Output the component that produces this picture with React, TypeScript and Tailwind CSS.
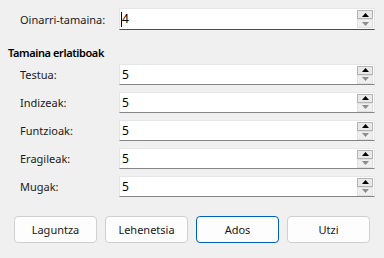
import React from "react";

function Spin() {
  return (
    <div className="flex flex-col mr-[1px] gap-[0px]">
      <div className="w-[16px] h-[9px] border border-[#b4b4b4] bg-[#e8e8e8] flex items-center justify-center">
        <svg width="7" height="4" viewBox="0 0 7 4"><path d="M0 4 L3.5 0 L7 4 Z" fill="#000" /></svg>
      </div>
      <div className="w-[16px] h-[9px] border border-[#e0e0e0] bg-[#efefef] flex items-center justify-center">
        <svg width="7" height="4" viewBox="0 0 7 4"><path d="M0 0 L7 0 L3.5 4 Z" fill="#8c8c8c" /></svg>
      </div>
    </div>
  );
}

function Field({ value, focused, h }: { value: string; focused?: boolean; h: string }) {
  return (
    <div
      className={
        "flex-1 mr-[9px] bg-white flex items-center border border-[#e6e6e6] " +
        (focused ? "border-b-[#005fb8] " : "border-b-[#868686] ") +
        h
      }
    >
      <div className="flex-1 pl-[1px] flex items-center text-[#000] text-[12px]">
        {focused && <span className="w-[1px] h-[15px] bg-black mr-[-1px]" />}
        <span className="pl-[1px]">{value}</span>
      </div>
      <Spin />
    </div>
  );
}

function Row({ label, value }: { label: string; value: string }) {
  return (
    <div className="flex items-center h-[21px]">
      <div className="w-[119px] pl-[20px] text-[#1a1a1a]">{label}</div>
      <Field value={value} h="h-[21px]" />
    </div>
  );
}

function Btn({ label, primary }: { label: string; primary?: boolean }) {
  return (
    <div
      className={
        "w-[83px] h-[27px] rounded-[4px] bg-[#fdfdfd] flex items-center justify-center text-[#1a1a1a] border " +
        (primary ? "border-[#005fb8]" : "border-[#d0d0d0]")
      }
    >
      {label}
    </div>
  );
}

export default function App() {
  return (
    <div className="w-[384px] h-[258px] bg-[#f0f0f0] text-[11px] leading-none font-['Noto_Sans','Liberation_Sans',sans-serif] pt-[8px] overflow-hidden">
      <div className="flex items-center h-[22px]">
        <div className="w-[119px] pl-[20px] text-[#1a1a1a]">Oinarri-tamaina:</div>
        <Field value="4" focused h="h-[22px]" />
      </div>
      <div className="mt-[14px] h-[16px] pl-[8px] font-semibold text-[11px] tracking-[-0.4px] text-[#000] flex items-center">Tamaina erlatiboak</div>
      <div className="mt-[4px] flex flex-col gap-[7px]">
        <Row label="Testua:" value="5" />
        <Row label="Indizeak:" value="5" />
        <Row label="Funtzioak:" value="5" />
        <Row label="Eragileak:" value="5" />
        <Row label="Mugak:" value="5" />
      </div>
      <div className="mt-[19px] flex gap-[8px] pl-[14px]">
        <Btn label="Laguntza" />
        <Btn label="Lehenetsia" />
        <Btn label="Ados" primary />
        <Btn label="Utzi" />
      </div>
    </div>
  );
}
